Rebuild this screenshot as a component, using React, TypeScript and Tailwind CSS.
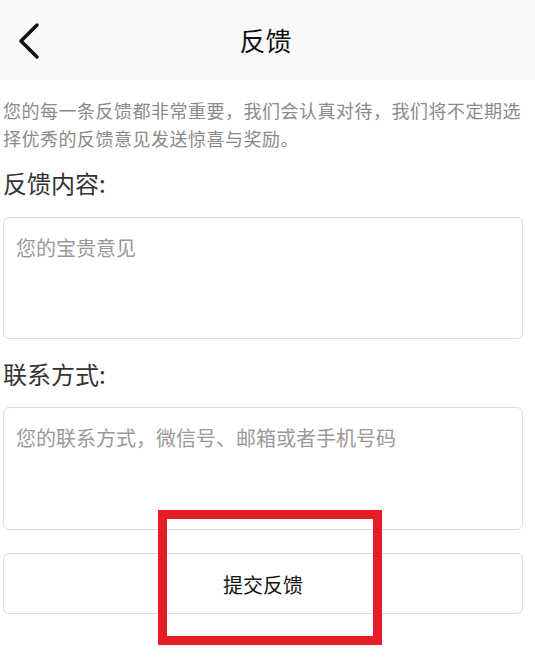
import React from "react";

export default function App() {
  return (
    <div
      className="relative min-h-screen w-[535px] bg-white"
      style={{ fontFamily: '"Noto Sans CJK SC", "Noto Sans", sans-serif' }}
    >
      {/* Header */}
      <header className="relative flex h-[80px] items-center justify-center bg-[#f9f9f9]">
        <button className="absolute left-[16px] top-[22px] flex h-[38px] w-[28px] items-center justify-center">
          <svg width="28" height="38" viewBox="0 0 28 38" fill="none">
            <path d="M21 3 L5 19 L21 35" stroke="#111" strokeWidth="3.5" strokeLinecap="round" strokeLinejoin="round" />
          </svg>
        </button>
        <h1 className="ml-[-4px] text-[26px] leading-none text-[#111]">反馈</h1>
      </header>

      <main className="pl-[3px] pr-[12px]">
        <p className="mr-[-12px] mt-[16px] text-[18px] leading-[28px] tracking-[0.5px] text-[#8a8a8a]">
          您的每一条反馈都非常重要，我们会认真对待，我们将不定期选择优秀的反馈意见发送惊喜与奖励。
        </p>

        <h2 className="mt-[16px] text-[24px] leading-[30px] text-[#333]">反馈内容:</h2>
        <textarea
          className="mt-[19px] block h-[122px] w-[520px] resize-none rounded-[6px] border border-[#dcdcdc] px-[12px] pt-[16px] text-[20px] leading-[28px] text-[#333] placeholder-[#999] outline-none"
          placeholder="您的宝贵意见"
        />

        <h2 className="mt-[20px] text-[24px] leading-[30px] text-[#333]">联系方式:</h2>
        <textarea
          className="mt-[18px] block h-[123px] w-[520px] resize-none rounded-[6px] border border-[#dcdcdc] px-[12px] pt-[16px] text-[20px] leading-[28px] text-[#333] placeholder-[#999] outline-none"
          placeholder="您的联系方式，微信号、邮箱或者手机号码"
        />

        <button className="mt-[23px] flex h-[61px] w-[520px] items-center justify-center rounded-[6px] border border-[#dcdcdc] bg-white pt-[3px] text-[20px] text-[#111]">
          提交反馈
        </button>
      </main>

      {/* Red highlight */}
      <div className="pointer-events-none absolute left-[158px] top-[510px] h-[135px] w-[224px] border-[9px] border-[#e31e26]" />
    </div>
  );
}
